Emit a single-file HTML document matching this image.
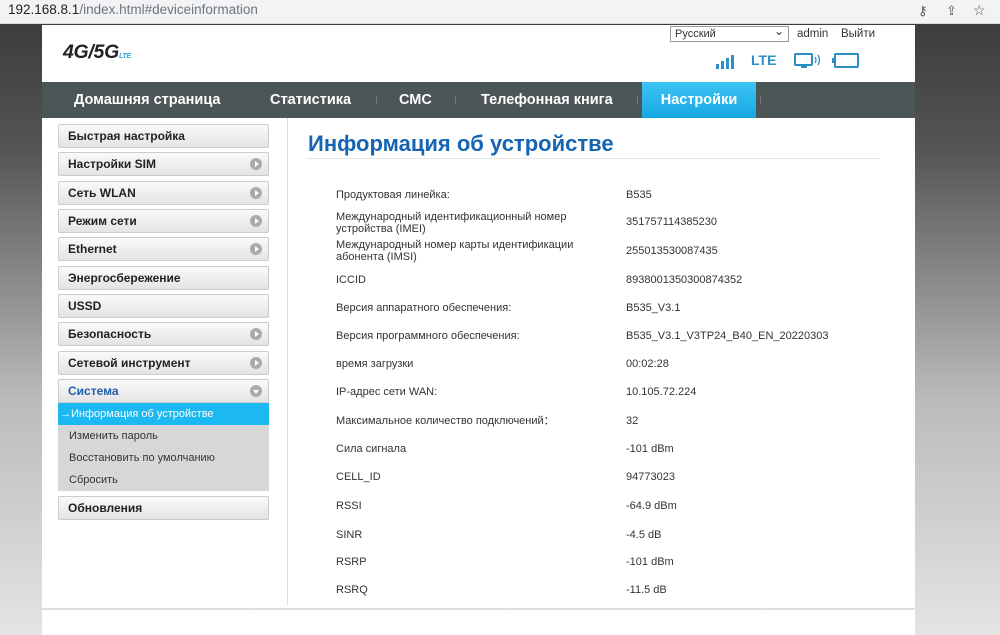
<!DOCTYPE html>
<html><head><meta charset="utf-8"><style>
*{margin:0;padding:0;box-sizing:border-box}
body{width:1000px;height:635px;overflow:hidden;font-family:"Liberation Sans",Arial,sans-serif;position:relative;background:linear-gradient(#383838 0px,#555 150px,#bbb 400px,#e4e4e4 635px)}
.bar{position:absolute;left:0;top:0;width:1000px;height:24px;background:#f1f3f4;border-bottom:1px solid #dadce0}
.url{position:absolute;left:8px;top:2px;font-size:13.5px;color:#202124}
.url span{color:#70757a}
.wrap{position:absolute;left:42px;top:25px;width:873px;height:583px;background:#fff}
.foot{position:absolute;left:42px;top:609px;width:873px;height:26px;background:#fff;border-top:1px solid #ddd}
.logo{position:absolute;left:21px;top:16px;font:italic bold 19.5px "Liberation Sans",sans-serif;color:#222;letter-spacing:-0.3px}
.logo small{font-size:7px;color:#29a3d6}
.sel{position:absolute;left:628px;top:1px;width:119px;height:16px;border:1px solid #999;font-size:11px;color:#333;padding:1px 4px}
.sel:after{content:"⌄";position:absolute;right:4px;top:-3px;font-size:12px}
.top{position:absolute;top:3px;font-size:11.5px;color:#333}
.nav{position:absolute;left:0;top:57px;width:873px;height:36px;background:#4c5657}
.nav div{position:absolute;top:0;height:36px;line-height:36px;color:#fff;font-weight:bold;font-size:14.5px}
.nav .sep{width:1px;height:8px;top:14px;background:#777}
.side{position:absolute;left:16px;width:211px;height:24px;border:1px solid #ccc;border-radius:2px;background:linear-gradient(#fafafa,#e4e4e4);font-weight:bold;font-size:12px;color:#222;padding-left:9px;line-height:22px}
.side i{position:absolute;right:6px;top:5px;width:12px;height:12px;border-radius:50%;background:#aaa}
.side i:after{content:"";position:absolute;left:5px;top:3px;border-left:4px solid #fff;border-top:3px solid transparent;border-bottom:3px solid transparent}
.sub{position:absolute;left:16px;width:211px;height:22px;line-height:22px;font-size:11px;color:#333;padding-left:11px;background:#d7d7d7}
.vl{position:absolute;left:245px;top:93px;width:1px;height:487px;background:#ddd}
h1{position:absolute;left:266px;top:106px;font-size:22px;color:#1565b3;font-weight:bold}
.hr{position:absolute;left:264px;top:133px;width:574px;height:1px;background:#e6e6e6}
.l,.v{position:absolute;font-size:11px;color:#333;line-height:12px}
.l{left:294px}.v{left:584px}
</style></head><body>
<div class="bar"><div class="url">192.168.8.1<span>/index.html#deviceinformation</span></div>
<div style="position:absolute;left:918px;top:3px;font-size:13px;color:#555">⚷</div>
<div style="position:absolute;left:946px;top:3px;font-size:13px;color:#555">⇪</div>
<div style="position:absolute;left:973px;top:2px;font-size:14px;color:#555">☆</div></div>
<div class="wrap">
<div class="logo">4G/5G<small>LTE</small></div>
<div class="sel">Русский</div>
<div class="top" style="left:755px">admin</div><div class="top" style="left:799px">Выйти</div>
<svg style="position:absolute;left:673px;top:29px" width="20" height="16"><rect x="1" y="10" width="3" height="5" fill="#2a8fc4"/><rect x="6" y="7" width="3" height="8" fill="#2a8fc4"/><rect x="11" y="4" width="3" height="11" fill="#2a8fc4"/><rect x="16" y="1" width="3" height="14" fill="#2a8fc4"/></svg>
<div style="position:absolute;left:709px;top:27px;font-weight:bold;font-size:14px;color:#2a8fc4">LTE</div>
<svg style="position:absolute;left:752px;top:27px" width="28" height="18"><rect x="1" y="2" width="17" height="11" rx="1" fill="none" stroke="#2a8fc4" stroke-width="2"/><rect x="7" y="13" width="6" height="3" fill="#2a8fc4"/><path d="M21 5q2 3 0 6M24 3q3 5 0 10" stroke="#2a8fc4" fill="none" stroke-width="1.3"/></svg>
<svg style="position:absolute;left:790px;top:28px" width="28" height="16"><rect x="3" y="1" width="23" height="13" rx="1" fill="none" stroke="#2a8fc4" stroke-width="2"/><rect x="0" y="5" width="3" height="5" fill="#2a8fc4"/></svg>
<div class="nav">
<div style="left:32px">Домашняя страница</div><div class="sep" style="left:245px"></div>
<div style="left:228px">Статистика</div><div class="sep" style="left:334px"></div>
<div style="left:357px">СМС</div><div class="sep" style="left:413px"></div>
<div style="left:439px">Телефонная книга</div><div class="sep" style="left:595px"></div>
<div style="left:600px;width:114px;background:linear-gradient(#3cc4f4,#16a8e2);text-align:center">Настройки</div><div class="sep" style="left:718px"></div>
</div>
<div class="side" style="top:99px">Быстрая настройка</div>
<div class="side" style="top:127px">Настройки SIM<i></i></div>
<div class="side" style="top:156px">Сеть WLAN<i></i></div>
<div class="side" style="top:184px">Режим сети<i></i></div>
<div class="side" style="top:212px">Ethernet<i></i></div>
<div class="side" style="top:241px">Энергосбережение</div>
<div class="side" style="top:269px">USSD</div>
<div class="side" style="top:297px">Безопасность<i></i></div>
<div class="side" style="top:326px">Сетевой инструмент<i></i></div>
<div class="side" style="top:354px;color:#1d5fa8">Система<i style="transform:rotate(90deg)"></i></div>
<div class="sub" style="top:378px;background:#1bb8f2;color:#fff;padding-left:2px">→Информация об устройстве</div>
<div class="sub" style="top:400px">Изменить пароль</div>
<div class="sub" style="top:422px">Восстановить по умолчанию</div>
<div class="sub" style="top:444px;height:22px">Сбросить</div>
<div class="side" style="top:471px">Обновления</div>
<div class="vl"></div>
<h1>Информация об устройстве</h1><div class="hr"></div>
<div class="l" style="top:164px">Продуктовая линейка:</div><div class="v" style="top:164px">B535</div>
<div class="l" style="top:186px">Международный идентификационный номер<br>устройства (IMEI)</div><div class="v" style="top:191px">351757114385230</div>
<div class="l" style="top:214px">Международный номер карты идентификации<br>абонента (IMSI)</div><div class="v" style="top:220px">255013530087435</div>
<div class="l" style="top:249px">ICCID</div><div class="v" style="top:249px">8938001350300874352</div>
<div class="l" style="top:277px">Версия аппаратного обеспечения:</div><div class="v" style="top:277px">B535_V3.1</div>
<div class="l" style="top:305px">Версия программного обеспечения:</div><div class="v" style="top:305px">B535_V3.1_V3TP24_B40_EN_20220303</div>
<div class="l" style="top:333px">время загрузки</div><div class="v" style="top:333px">00:02:28</div>
<div class="l" style="top:361px">IP-адрес сети WAN:</div><div class="v" style="top:361px">10.105.72.224</div>
<div class="l" style="top:390px">Максимальное количество подключений：</div><div class="v" style="top:390px">32</div>
<div class="l" style="top:418px">Сила сигнала</div><div class="v" style="top:418px">-101 dBm</div>
<div class="l" style="top:446px">CELL_ID</div><div class="v" style="top:446px">94773023</div>
<div class="l" style="top:475px">RSSI</div><div class="v" style="top:475px">-64.9 dBm</div>
<div class="l" style="top:504px">SINR</div><div class="v" style="top:504px">-4.5 dB</div>
<div class="l" style="top:531px">RSRP</div><div class="v" style="top:531px">-101 dBm</div>
<div class="l" style="top:559px">RSRQ</div><div class="v" style="top:559px">-11.5 dB</div>
</div>
<div class="foot"></div>
</body></html>
